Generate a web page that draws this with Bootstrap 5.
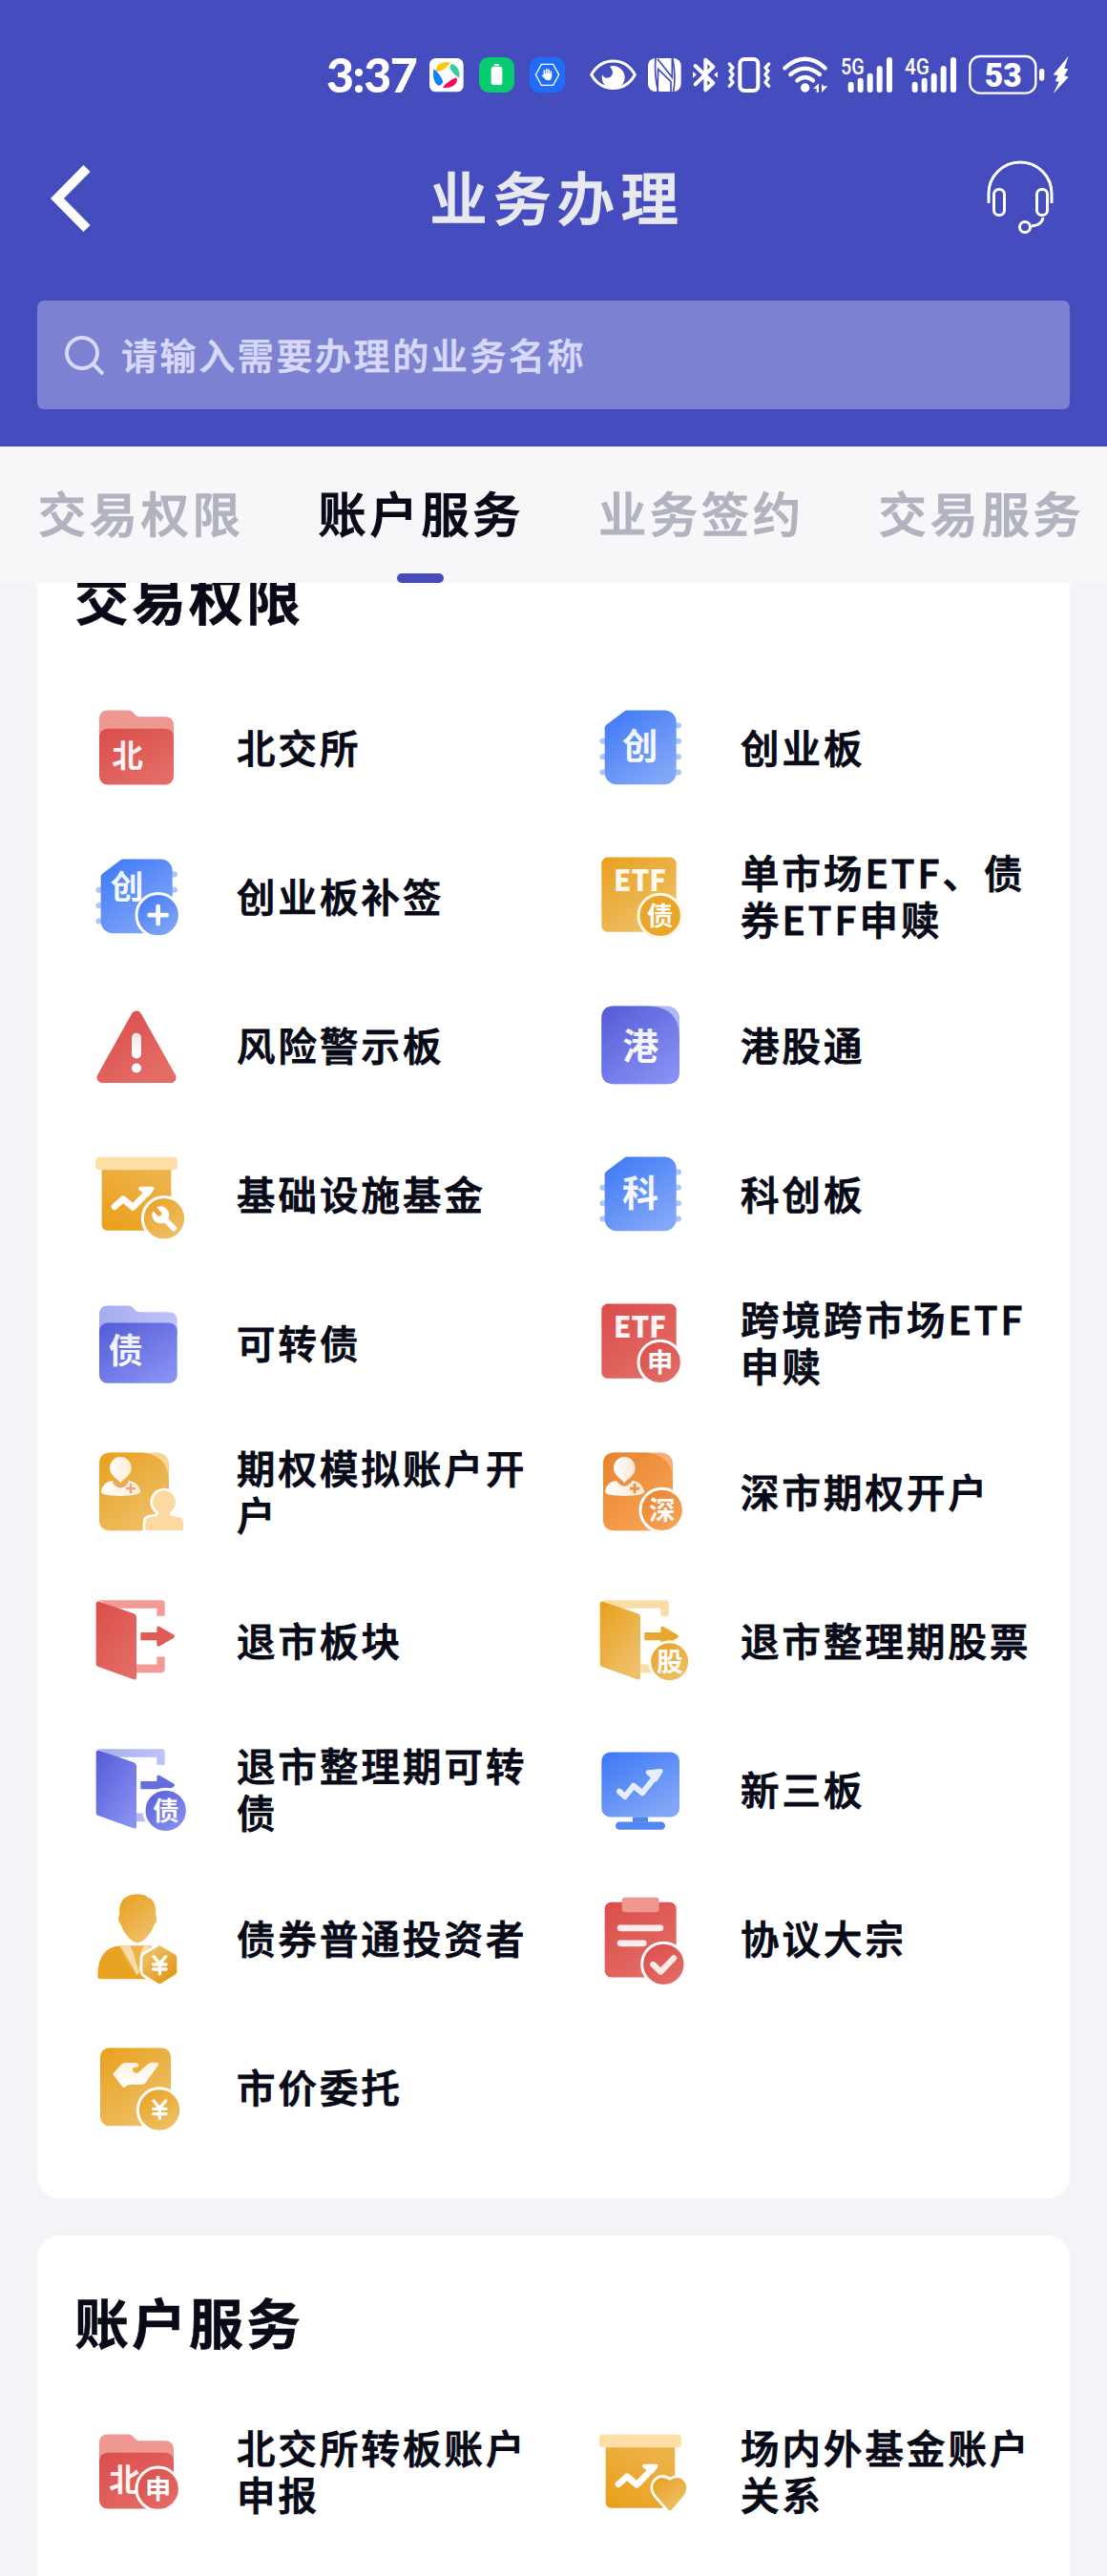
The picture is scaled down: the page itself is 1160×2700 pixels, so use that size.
<!DOCTYPE html>
<html lang="zh-CN">
<head>
  <meta charset="UTF-8">
  <meta name="viewport" content="width=device-width, initial-scale=1">
  <title>业务办理</title>
  <link href="https://cdn.jsdelivr.net/npm/bootstrap@5.3.3/dist/css/bootstrap.min.css" rel="stylesheet">
  <style>
    body {
      width: 1160px;
      height: 2700px;
      overflow: hidden;
      background: #f3f4f7;
      color: #080a18;
      font-family: "Noto Sans CJK SC", sans-serif;
    }
    svg { display: block; flex: none; overflow: visible; }
    svg text { font-family: "Noto Sans CJK SC", sans-serif; }

    /* header */
    .app-header { height: 468px; background: #454cbe; }
    .status-bar { height: 99px; padding: 57px 0 0 342px; }
    .status-bar svg { height: 42px; }
    .status-bar svg .net-label { font-family: Roboto, sans-serif; }
    .clock {
      width: 96px;
      font: 900 50px/42px Lato, sans-serif;
      letter-spacing: -1.4px;
      white-space: nowrap;
    }
    .title-bar { height: 80px; margin-top: 69px; padding: 0 50px; }
    .title-bar h1 {
      font-size: 60px;
      line-height: 80px;
      letter-spacing: 6.8px;
      font-weight: 500;
      color: #e8e9ef;
      padding: 0 0 6px 32px;
      -webkit-text-stroke: 1.3px;
    }
    .search-box {
      height: 114px;
      margin: 67px 39px 0;
      padding: 0 0 3px 28px;
      border-radius: 7px;
      background: #7c82d1;
      color: #d8d8f8;
      font-size: 38px;
      font-weight: 500;
      letter-spacing: 2.6px;
    }
    .search-box span { -webkit-text-stroke: .7px; }

    /* tabs */
    .tab-strip { height: 143px; padding-left: 40px; gap: 78px; background: #f7f7fa; }
    .tab-strip .nav-link {
      position: relative;
      height: 143px;
      padding: 0;
      color: #b1b3bf;
      font-size: 50px;
      font-weight: 500;
      line-height: 136px;
      letter-spacing: 3.9px;
      white-space: nowrap;
      -webkit-text-stroke: 1.2px;
    }
    .tab-strip .nav-link.active { color: #080a18; }
    .tab-strip .nav-link.active::after {
      content: "";
      position: absolute;
      left: 82px;
      bottom: 0;
      width: 49px;
      height: 10px;
      border-radius: 5px;
      background: #454cbe;
    }

    /* cards */
    .scroll-area { height: 2089px; overflow: hidden; padding: 0 39px; }
    .panel { background: #fff; border-radius: 24px; padding: 49px 0 38px 51px; margin-bottom: 39px; }
    .panel.scrolled { margin-top: -75px; }
    .panel.running-on { padding-bottom: 120px; }
    .panel h2 {
      margin: 0 0 41px -12px;
      font-size: 57px;
      line-height: 80px;
      font-weight: 700;
      letter-spacing: 3px;
      -webkit-text-stroke: .5px;
    }
    .entries { display: grid; grid-template-columns: 528px 1fr; grid-auto-rows: 156px; }
    .entry svg { width: 110px; height: 110px; }
    .entry-name {
      width: 312px;
      margin-left: 48px;
      margin-top: -4px;
      font-size: 40.4px;
      line-height: 49px;
      font-weight: 500;
      letter-spacing: 3.1px;
      -webkit-text-stroke: 1px;
    }
  </style>
</head>
<body>

<!-- shared gradients and icon parts -->
<svg width="0" height="0" class="position-absolute">
  <defs>
    <linearGradient id="red" x1="0" y1="0" x2=".7" y2="1"><stop stop-color="#da4d4b"/><stop offset="1" stop-color="#e46c66"/></linearGradient>
    <linearGradient id="blue" x1="0" y1="0" x2=".7" y2="1"><stop stop-color="#3c77f6"/><stop offset="1" stop-color="#82a7f7"/></linearGradient>
    <linearGradient id="gold" x1="0" y1="0" x2=".7" y2="1"><stop stop-color="#e9a01c"/><stop offset="1" stop-color="#eec06a"/></linearGradient>
    <linearGradient id="goldUp" x1="0" y1="1" x2=".7" y2="0"><stop stop-color="#e99f18"/><stop offset="1" stop-color="#edb34b"/></linearGradient>
    <linearGradient id="goldBack" x1="0" y1="0" x2=".8" y2="1"><stop stop-color="#f3c978"/><stop offset="1" stop-color="#e09410"/></linearGradient>
    <linearGradient id="violet" x1="0" y1="0" x2=".8" y2="1"><stop stop-color="#545bd6"/><stop offset="1" stop-color="#8791f3"/></linearGradient>
    <linearGradient id="orange" x1="0" y1="0" x2=".7" y2="1"><stop stop-color="#e9832b"/><stop offset="1" stop-color="#f7a357"/></linearGradient>
    <linearGradient id="shine" x1="0" y1="0" x2="0" y2="1"><stop stop-color="#fff" stop-opacity=".84"/><stop offset="1" stop-color="#fff"/></linearGradient>
    <linearGradient id="shineX" x1="0" y1="0" x2="1" y2="0"><stop stop-color="#fff"/><stop offset="1" stop-color="#fff" stop-opacity=".78"/></linearGradient>
    <linearGradient id="violetPale" x1="0" y1="0" x2="1" y2="0"><stop stop-color="#a5acec"/><stop offset="1" stop-color="#bdc3fc"/></linearGradient>

    <symbol id="chip" viewBox="0 0 330 330">
      <path d="M40 143.500h14M40 192.500h14M40 241.500h14M265 94.500h14M265 143.500h14M265 192.500h14M265 241.500h14" stroke="#aec5fa" stroke-width="18" stroke-linecap="round"/>
      <path d="M118 46.500h117a37 37 0 0 1 37 37v159a37 37 0 0 1-37 37H84a37 37 0 0 1-37-37V103q0-7 5-11l56-42q4-3.500 10-3.500z" fill="url(#blue)"/>
    </symbol>
    <symbol id="chart-board" viewBox="0 0 330 330">
      <path d="M50 80h218v198.500H70q-20 0-20-20z" fill="url(#goldUp)"/>
      <rect x="30" y="47.500" width="258" height="40" rx="12" fill="#fedfa5"/>
      <path d="M90 203l27-24 31 26 49-50" fill="none" stroke="#fff" stroke-width="20" stroke-linecap="round" stroke-linejoin="round"/>
      <path d="M171 146h38l-13 18z" fill="#fff" stroke="#fff" stroke-width="12" stroke-linejoin="round"/>
    </symbol>
    <symbol id="investor" viewBox="0 0 330 330">
      <path d="M109 137c-4-12-34-22-34-48a34 35 0 0 1 68 0c0 26-30 36-34 48z" fill="url(#shineX)"/>
      <path d="M48 163c3-18 14-32 36-34 7 10 15 17 25 17s18-7 25-17c22 2 33 16 38 34 2 9-28 14-62 14s-64-4-62-14z" fill="url(#shineX)"/>
    </symbol>
    <symbol id="arrow-out" viewBox="0 0 330 330">
      <path d="M172 138h51v-13q1-9 9-5l43 25q8 5.500 0 11l-43 25q-8 4-9-5v-13h-51z"/>
    </symbol>
  </defs>
</svg>

<header class="app-header">
  <div class="status-bar d-flex text-white">
    <div class="clock">3:37</div>
    <!-- pinwheel app -->
    <svg width="36" viewBox="0 0 108 126" style="margin-left:12px">
      <rect y="12" width="107" height="106" rx="20" fill="#fff"/>
      <path d="M21 46C24 28 44 22 66 26 58 38 42 52 21 54z" fill="#fbc70c"/>
      <path d="M70 30c18 5 27 22 24 44-14-7-24-20-30-32 0-5 3-9 6-12z" fill="#35cda3"/>
      <path d="M87 78c0 20-20 30-45 26 8-12 25-24 42-31z" fill="#fb0b55"/>
      <path d="M14 46c12 10 24 24 29 40-4 8-10 14-16 12C13 88 9 66 14 46z" fill="#0a84f6"/>
    </svg>
    <!-- battery app -->
    <svg width="37" viewBox="0 0 111 126" style="margin-left:16px">
      <rect y="9" width="111" height="111" rx="32" fill="#08cd70"/>
      <rect x="38" y="38" width="35" height="58" rx="8" fill="#fff"/>
      <rect x="47" y="30" width="16" height="6" rx="3" fill="#fff"/>
    </svg>
    <!-- guard app -->
    <svg width="37" viewBox="0 0 111 126" style="margin-left:16px">
      <rect y="9" width="111" height="111" rx="32" fill="#1f6bfa"/>
      <path d="M37 31h37l18 33-18 33H37L19 64z" fill="none" stroke="#fff" stroke-width="4"/>
      <path d="M46 62V51M53 62V47M60 62V48M67 66V54" stroke="#fff" stroke-width="5" stroke-linecap="round"/>
      <path d="M43.500 60h26v12q-2 10-11 10-8 0-12-6l-9-9q3-4 6-1z" fill="#fff"/>
    </svg>
    <!-- eye -->
    <svg width="49" viewBox="0 0 147 126" style="margin-left:26px">
      <path d="M5 64C38 7 110 7 142 64 110 121 38 121 5 64z" fill="none" stroke="#fff" stroke-width="9" stroke-linejoin="round"/>
      <path d="M63 38a36 36 0 1 1-24 26q8 14 22 9c14-6 14-22 2-35z" fill="#fff"/>
    </svg>
    <!-- nfc -->
    <svg width="35" viewBox="0 0 105 126" style="margin-left:12px">
      <rect y="12" width="104" height="105" rx="24" fill="#fff"/>
      <path d="M24 12q-5 50 8 105M72 117V86L32 46l-2 71M30 14l46 58V12M80 117q9-50-3-105" fill="none" stroke="#454cbe" stroke-width="5"/>
    </svg>
    <!-- bluetooth -->
    <svg width="28" viewBox="0 0 84 126" style="margin-left:11px">
      <path d="M11 36l56 54-24 22V17l24 22L11 94" fill="none" stroke="#fff" stroke-width="12" stroke-linecap="round" stroke-linejoin="round"/>
      <path d="M3 54l12 10-12 10zM81 54L69 64l12 10z" fill="#fff"/>
    </svg>
    <!-- vibrate -->
    <svg width="46" viewBox="0 0 138 126" style="margin-left:9px">
      <rect x="40" y="15" width="57" height="99" rx="14" fill="none" stroke="#fff" stroke-width="12"/>
      <path d="M7 30l11 12-9 10 9 12-9 12 9 12-11 12M131 30l-11 12 9 10-9 12 9 12-9 12 11 12" fill="none" stroke="#fff" stroke-width="10" stroke-linecap="round" stroke-linejoin="round"/>
    </svg>
    <!-- wifi -->
    <svg width="49" viewBox="0 0 147 126" style="margin-left:12px">
      <path d="M7 43Q71-14 134 43M25 63q45-38 92 0M46 82q25-20 50 0" fill="none" stroke="#fff" stroke-width="13" stroke-linecap="round"/>
      <circle cx="71" cy="105" r="14" fill="#fff"/>
      <path d="M96 108l18-17v28h-7v-11zM123 92v28l19-20h-13z" fill="#fff"/>
    </svg>
    <!-- 5G signal -->
    <svg width="55" viewBox="0 0 165 126" style="margin-left:12px">
      <text class="net-label" x="0" y="64" textLength="74" lengthAdjust="spacingAndGlyphs" fill="#fff" font-size="74" font-weight="500">5G</text>
      <path d="M32 95v16M62 83v28M92 68v43M122 45v66M153 18v93" stroke="#fff" stroke-width="18" stroke-linecap="round"/>
    </svg>
    <!-- 4G signal -->
    <svg width="55" viewBox="0 0 165 126" style="margin-left:12px">
      <text class="net-label" x="0" y="64" textLength="78" lengthAdjust="spacingAndGlyphs" fill="#fff" font-size="74" font-weight="500">4G</text>
      <path d="M32 95v16M62 83v28M92 68v43M122 45v66M153 18v93" stroke="#fff" stroke-width="18" stroke-linecap="round"/>
    </svg>
    <!-- battery level -->
    <svg width="80" viewBox="0 0 240 126" style="margin-left:12px">
      <rect x="4" y="6" width="207" height="116" rx="32" fill="none" stroke="#fff" stroke-width="7"/>
      <rect x="222" y="45" width="16" height="38" rx="8" fill="#fff"/>
      <text class="net-label" x="50" y="101" textLength="117" lengthAdjust="spacingAndGlyphs" fill="#fff" font-size="103" font-weight="900">53</text>
    </svg>
    <!-- charging bolt -->
    <svg width="18" viewBox="0 0 54 126" style="margin-left:8px">
      <path d="M50 5L2 64l15 3L8 84l12 2-18 38 48-53-13-4 12-21-12-2z" fill="#fff"/>
    </svg>
  </div>

  <div class="title-bar d-flex align-items-center justify-content-between">
    <svg width="54" height="80" viewBox="0 0 54 80"><path d="M41 8.500L10 40l31 31.500" fill="none" stroke="#fff" stroke-width="10"/></svg>
    <h1 class="m-0">业务办理</h1>
    <svg width="78" height="80" viewBox="1032 168 78 80" fill="none" stroke="#fff" stroke-width="3">
      <path d="M1036 213v-10a33 33 0 0 1 66 0v10M1093 228q-1 8-12 9"/>
      <rect x="1041.500" y="198.500" width="11" height="27" rx="5"/>
      <rect x="1086.500" y="198.500" width="11" height="27" rx="5"/>
      <circle cx="1074" cy="238" r="5.500"/>
    </svg>
  </div>

  <div class="search-box d-flex align-items-center">
    <svg width="60" height="44" viewBox="0 0 60 44" fill="none" stroke="#d8d8f8" stroke-width="4"><circle cx="19" cy="21" r="16"/><path d="M31 33l10 10"/></svg>
    <span>请输入需要办理的业务名称</span>
  </div>
</header>

<nav class="tab-strip nav flex-nowrap overflow-hidden">
  <a class="nav-link">交易权限</a>
  <a class="nav-link active">账户服务</a>
  <a class="nav-link">业务签约</a>
  <a class="nav-link">交易服务</a>
</nav>

<main class="scroll-area">
  <section class="panel scrolled">
    <h2>交易权限</h2>
    <div class="entries">

      <div class="entry d-flex align-items-center">
        <svg viewBox="0 0 330 330">
          <path d="M42 140V74.500q0-28 28-28h62q10 0 16 7l8 8q5 5 12 5h80q28 0 28 28V140z" fill="#ef9791"/>
          <rect x="42" y="104.500" width="234" height="176" rx="26" fill="url(#red)"/>
          <text x="131" y="188" dy=".38em" font-size="98" font-weight="700" text-anchor="middle" fill="url(#shine)">北</text>
        </svg>
        <div class="entry-name">北交所</div>
      </div>

      <div class="entry d-flex align-items-center">
        <svg viewBox="0 0 330 330">
          <use href="#chip"/>
          <text x="158" y="158" dy=".38em" font-size="112" font-weight="700" text-anchor="middle" fill="url(#shine)">创</text>
        </svg>
        <div class="entry-name">创业板</div>
      </div>

      <div class="entry d-flex align-items-center">
        <svg viewBox="0 0 330 330">
          <use href="#chip"/>
          <text x="129" y="132" dy=".38em" font-size="104" font-weight="700" text-anchor="middle" fill="url(#shine)">创</text>
          <circle cx="227" cy="222.500" r="68" fill="url(#blue)" stroke="#fff" stroke-width="9"/>
          <path d="M200 222.500h54M227 195.500v54" stroke="#fff" stroke-width="14" stroke-linecap="round"/>
        </svg>
        <div class="entry-name">创业板补签</div>
      </div>

      <div class="entry d-flex align-items-center">
        <svg viewBox="0 0 330 330">
          <rect x="37" y="40.500" width="235" height="235" rx="20" fill="url(#gold)"/>
          <text x="75" y="146" textLength="165" lengthAdjust="spacingAndGlyphs" font-size="91" font-weight="900" fill="#fffaf0">ETF</text>
          <circle cx="221" cy="224.500" r="68" fill="#eaa52b" stroke="#fff8e2" stroke-width="9"/>
          <text x="221" y="223" dy=".38em" font-size="82" font-weight="700" text-anchor="middle" fill="#fff">债</text>
        </svg>
        <div class="entry-name">单市场ETF、债券ETF申赎</div>
      </div>

      <div class="entry d-flex align-items-center">
        <svg viewBox="0 0 330 330">
          <path d="M159 72L51 265.500h216z" fill="url(#red)" stroke="url(#red)" stroke-width="33" stroke-linejoin="round"/>
          <rect x="144" y="125.500" width="30" height="80" rx="15" fill="url(#shine)"/>
          <circle cx="159" cy="235.500" r="15" fill="#fff"/>
        </svg>
        <div class="entry-name">风险警示板</div>
      </div>

      <div class="entry d-flex align-items-center">
        <svg viewBox="0 0 330 330">
          <rect x="37" y="40.500" width="245" height="245" rx="38" fill="#b0b6fa"/>
          <path d="M75 40.500h111q96 4 96 98v109q0 38-38 38H75q-38 0-38-38v-169q0-38 38-38z" fill="url(#violet)"/>
          <text x="160" y="163" dy=".38em" font-size="114" font-weight="700" text-anchor="middle" fill="url(#shine)">港</text>
        </svg>
        <div class="entry-name">港股通</div>
      </div>

      <div class="entry d-flex align-items-center">
        <svg viewBox="0 0 330 330">
          <use href="#chart-board"/>
          <circle cx="246" cy="240.500" r="68" fill="url(#gold)" stroke="#fff" stroke-width="9"/>
          <circle cx="235" cy="229" r="27" fill="#fff"/>
          <path d="M243 237l33 34" stroke="#fff" stroke-width="18" stroke-linecap="round"/>
          <path d="M210 204l20 21" stroke="#e9a93a" stroke-width="16" stroke-linecap="round"/>
        </svg>
        <div class="entry-name">基础设施基金</div>
      </div>

      <div class="entry d-flex align-items-center">
        <svg viewBox="0 0 330 330">
          <use href="#chip"/>
          <text x="159" y="158" dy=".38em" font-size="114" font-weight="700" text-anchor="middle" fill="url(#shine)">科</text>
        </svg>
        <div class="entry-name">科创板</div>
      </div>

      <div class="entry d-flex align-items-center">
        <svg viewBox="0 0 330 330">
          <path d="M42 140V74.500q0-28 28-28h62q10 0 16 7l8 8q5 5 12 5h91q28 0 28 28V140z" fill="url(#violetPale)"/>
          <rect x="42" y="100.500" width="245" height="190" rx="26" fill="url(#violet)"/>
          <text x="125" y="186" dy=".38em" font-size="108" font-weight="700" text-anchor="middle" fill="url(#shine)">债</text>
        </svg>
        <div class="entry-name">可转债</div>
      </div>

      <div class="entry d-flex align-items-center">
        <svg viewBox="0 0 330 330">
          <rect x="37" y="40.500" width="235" height="235" rx="20" fill="url(#red)"/>
          <text x="75" y="146" textLength="165" lengthAdjust="spacingAndGlyphs" font-size="91" font-weight="900" fill="#fff4f4">ETF</text>
          <circle cx="221" cy="224.500" r="68" fill="url(#red)" stroke="#fff" stroke-width="9"/>
          <text x="221" y="223" dy=".38em" font-size="82" font-weight="700" text-anchor="middle" fill="#fff">申</text>
        </svg>
        <div class="entry-name">跨境跨市场ETF申赎</div>
      </div>

      <div class="entry d-flex align-items-center">
        <svg viewBox="0 0 330 330">
          <rect x="42" y="40.500" width="219" height="245" rx="36" fill="#f8d590"/>
          <path d="M78 40.500h92q91 4 91 94v115q0 36-36 36H78q-36 0-36-36v-173q0-36 36-36z" fill="url(#gold)"/>
          <use href="#investor"/>
          <path d="M86 131q10 17 23 17t23-17M141 138v31M125.500 153.500h31" fill="none" stroke="#eea077" stroke-width="7"/>
          <path d="M244 160a36 36 0 0 1 22 66q-5 12 4 14l20 4q16 2 16 14v28H187v-28q0-12 16-14l20-4q8-2 3-14a36 36 0 0 1 18-66z" fill="#fdd9a2" stroke="#fff" stroke-width="16" paint-order="stroke"/>
          <rect x="178" y="285.500" width="140" height="12" fill="#fff"/>
        </svg>
        <div class="entry-name">期权模拟账户开户</div>
      </div>

      <div class="entry d-flex align-items-center">
        <svg viewBox="0 0 330 330">
          <rect x="42" y="40.500" width="219" height="245" rx="36" fill="#f8ae72"/>
          <path d="M78 40.500h92q91 4 91 94v115q0 36-36 36H78q-36 0-36-36v-173q0-36 36-36z" fill="url(#orange)"/>
          <use href="#investor"/>
          <path d="M141 138v31M125.500 153.500h31" stroke="#ee9342" stroke-width="9"/>
          <circle cx="227" cy="221.500" r="68" fill="url(#orange)" stroke="#fff" stroke-width="9"/>
          <text x="228" y="220" dy=".38em" font-size="82" font-weight="700" text-anchor="middle" fill="#fff">深</text>
        </svg>
        <div class="entry-name">深市期权开户</div>
      </div>

      <div class="entry d-flex align-items-center">
        <svg viewBox="0 0 330 330">
          <path d="M36 36.500h202q10 0 10 10v40h-25v-24H95zM159 238.500h64v-24h25v40q0 10-10 10h-79z" fill="#f19a96"/>
          <path d="M32 48q0-10 10-7l109 38q8 3 8 12v188q0 10-9 7L37 245q-5-2-5-8z" fill="url(#red)"/>
          <use href="#arrow-out" fill="#e05b57"/>
        </svg>
        <div class="entry-name">退市板块</div>
      </div>

      <div class="entry d-flex align-items-center">
        <svg viewBox="0 0 330 330">
          <path d="M36 36.500h202q10 0 10 10v40h-25v-24H95zM159 238.500h40v26h-40z" fill="#f9dca6"/>
          <path d="M32 48q0-10 10-7l109 38q8 3 8 12v188q0 10-9 7L37 245q-5-2-5-8z" fill="url(#gold)"/>
          <use href="#arrow-out" fill="#eaa730"/>
          <circle cx="251" cy="230.500" r="63" fill="url(#gold)" stroke="#fff" stroke-width="9"/>
          <text x="252" y="229" dy=".38em" font-size="82" font-weight="700" text-anchor="middle" fill="#fff">股</text>
        </svg>
        <div class="entry-name">退市整理期股票</div>
      </div>

      <div class="entry d-flex align-items-center">
        <svg viewBox="0 0 330 330">
          <path d="M36 36.500h202q10 0 10 10v40h-25v-24H95zM159 238.500h35v26h-35z" fill="url(#violetPale)"/>
          <path d="M32 48q0-10 10-7l109 38q8 3 8 12v188q0 10-9 7L37 245q-5-2-5-8z" fill="url(#violet)"/>
          <use href="#arrow-out" fill="#656dde"/>
          <circle cx="251" cy="230.500" r="68" fill="url(#violet)" stroke="#fff" stroke-width="9"/>
          <text x="252" y="229" dy=".38em" font-size="82" font-weight="700" text-anchor="middle" fill="#fff">债</text>
        </svg>
        <div class="entry-name">退市整理期可转债</div>
      </div>

      <div class="entry d-flex align-items-center">
        <svg viewBox="0 0 330 330">
          <rect x="37" y="46.500" width="245" height="204" rx="28" fill="url(#blue)"/>
          <path d="M135 250.500h48v16h-48z" fill="#4e83f3"/>
          <rect x="81" y="265.500" width="156" height="25" rx="12.500" fill="#5287f4"/>
          <path d="M93 170l18 16 27-34 27 23 43-54" fill="none" stroke="#e6eefe" stroke-width="18" stroke-linecap="round" stroke-linejoin="round"/>
          <path d="M183 110l40-4-16 26z" fill="#e6eefe" stroke="#e6eefe" stroke-width="14" stroke-linejoin="round"/>
        </svg>
        <div class="entry-name">新三板</div>
      </div>

      <div class="entry d-flex align-items-center">
        <svg viewBox="0 0 330 330">
          <path d="M160 25.500c18-1 30 2 32 9 22 6 30 24 27 58 6 2 5 22-4 28-8 26-34 57-53 57s-44-31-52-57c-9-6-10-26-4-28-4-46 14-66 54-67z" fill="url(#gold)"/>
          <path d="M108 187.500h98l-14 104H46q-9 0-9-9 0-90 71-95z" fill="#e9a322"/>
          <path d="M106 187.500h98l-40 90-6 0z" fill="#f8dcae"/>
          <path d="M108 187.500l52 88q-34-30-52-88zM139 187.500h42l-8 18-7 62-18-62z" fill="#edb34a"/>
          <path d="M232 186.500l48 28q6 4 6 10v44q0 6-6 10l-42 26q-6 4-12 0l-42-26q-6-4-6-10v-44q0-6 6-10z" fill="url(#goldBack)" stroke="#fff" stroke-width="16" paint-order="stroke" stroke-linejoin="round"/>
          <path d="M213 221l19 23 19-23M232 246v30M212 246h40M212 261h40" fill="none" stroke="#fff" stroke-width="10" stroke-linecap="round"/>
        </svg>
        <div class="entry-name">债券普通投资者</div>
      </div>

      <div class="entry d-flex align-items-center">
        <svg viewBox="0 0 330 330">
          <rect x="47" y="50.500" width="225" height="236" rx="20" fill="url(#red)"/>
          <rect x="101" y="35.500" width="117" height="46" rx="10" fill="#ef9892"/>
          <path d="M96 131.500h126M96 179.500h73" stroke="#fdeceb" stroke-width="20" stroke-linecap="round"/>
          <circle cx="232" cy="245.500" r="68" fill="url(#red)" stroke="#fff" stroke-width="9"/>
          <path d="M199 246l24 23 41-43" fill="none" stroke="#fdeaea" stroke-width="19" stroke-linecap="round" stroke-linejoin="round"/>
        </svg>
        <div class="entry-name">协议大宗</div>
      </div>

      <div class="entry d-flex align-items-center">
        <svg viewBox="0 0 330 330">
          <rect x="45" y="40.500" width="222" height="245" rx="28" fill="url(#gold)"/>
          <path d="M87 120l24-27q5-6 13-6h33q10 2 8 13l-14 3q-7 3-2 11 7 10 18 2l28-25q5-5 14-5h14q9 1 4 10l-39 53q-6 8-16 7h-32q-8 0-16 7-6 4-10-2l-27-34q-4-4 0-7z" fill="url(#shine)"/>
          <circle cx="231" cy="235.500" r="68" fill="url(#gold)" stroke="#fff" stroke-width="9"/>
          <path d="M213 207l19 23 19-23M232 232v30M212 232h40M212 248h40" fill="none" stroke="#fff" stroke-width="10" stroke-linecap="round"/>
        </svg>
        <div class="entry-name">市价委托</div>
      </div>

    </div>
  </section>

  <section class="panel running-on">
    <h2>账户服务</h2>
    <div class="entries">
      <div class="entry d-flex align-items-center">
        <svg viewBox="0 0 330 330">
          <path d="M42 140V74.500q0-28 28-28h62q10 0 16 7l8 8q5 5 12 5h80q28 0 28 28V140z" fill="#ef9791"/>
          <rect x="42" y="104.500" width="234" height="176" rx="26" fill="url(#red)"/>
          <text x="122" y="188" dy=".38em" font-size="98" font-weight="700" text-anchor="middle" fill="url(#shine)">北</text>
          <circle cx="227" cy="218" r="68" fill="url(#red)" stroke="#fff" stroke-width="9"/>
          <text x="227" y="217" dy=".38em" font-size="82" font-weight="700" text-anchor="middle" fill="#fff">申</text>
        </svg>
        <div class="entry-name">北交所转板账户申报</div>
      </div>

      <div class="entry d-flex align-items-center">
        <svg viewBox="0 0 330 330">
          <use href="#chart-board"/>
          <path d="M252 191q30-20 48 8 10 22-6 42l-36 42q-6 7-12 0l-36-42q-18-22-8-42 18-28 50-8z" fill="url(#gold)" stroke="#fff" stroke-width="16" paint-order="stroke"/>
        </svg>
        <div class="entry-name">场内外基金账户关系</div>
      </div>
    </div>
  </section>
</main>

<script src="https://cdn.jsdelivr.net/npm/bootstrap@5.3.3/dist/js/bootstrap.bundle.min.js"></script>
</body>
</html>
